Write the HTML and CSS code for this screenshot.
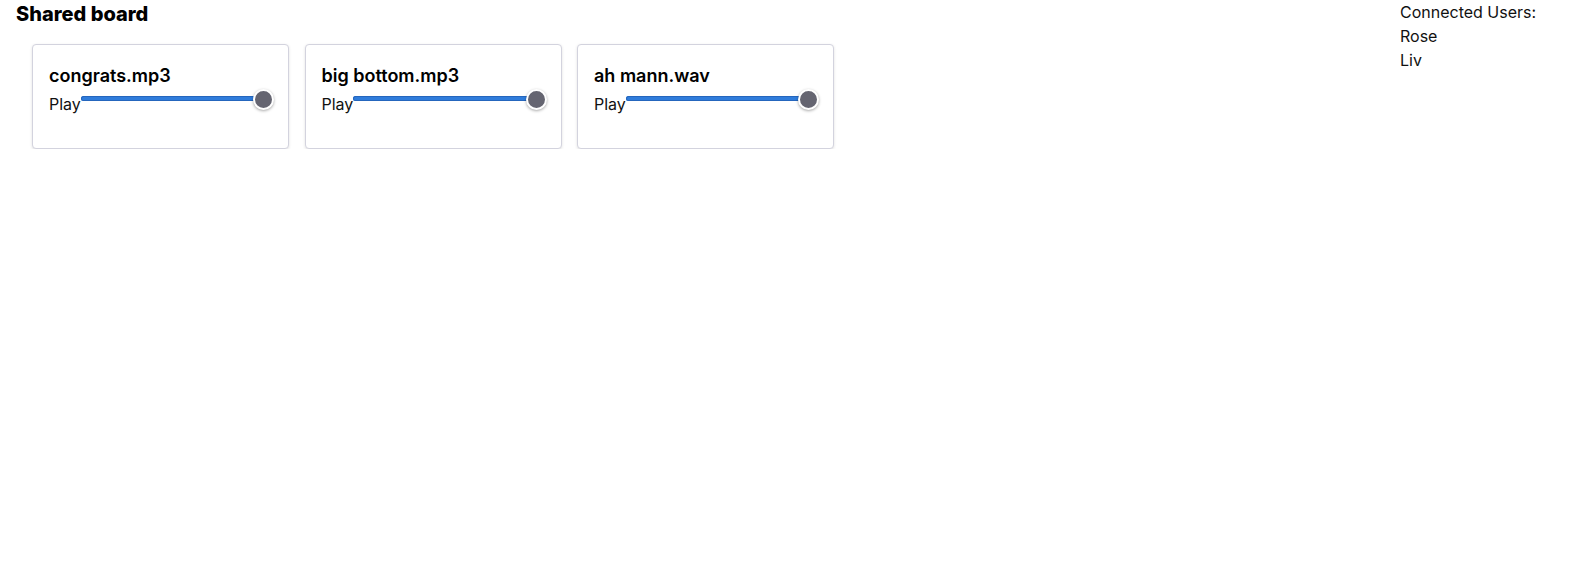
FILE: index.html
```html
<!DOCTYPE html>
<html>
<head>
<meta charset="utf-8">
<link rel="stylesheet" href="styles.css">
</head>
<body>
<div class="page">
  <main class="main">
    <h1 class="title">Shared board</h1>
    <div class="cards">
      <div class="card">
        <div class="card-title">congrats.mp3</div>
        <div class="row">
          <span class="play">Play</span>
          <div class="slider"><div class="track"></div><div class="thumb"></div></div>
        </div>
      </div>
      <div class="card">
        <div class="card-title">big bottom.mp3</div>
        <div class="row">
          <span class="play">Play</span>
          <div class="slider"><div class="track"></div><div class="thumb"></div></div>
        </div>
      </div>
      <div class="card">
        <div class="card-title">ah mann.wav</div>
        <div class="row">
          <span class="play">Play</span>
          <div class="slider"><div class="track"></div><div class="thumb"></div></div>
        </div>
      </div>
    </div>
  </main>
  <aside class="users">
    <div>Connected Users:</div>
    <div>Rose</div>
    <div>Liv</div>
  </aside>
</div>
</body>
</html>
```
FILE: styles.css
```css
html, body { margin: 0; padding: 0; background: #fff; }
body { font-family: Inter, "Noto Sans", sans-serif; color: #111; font-size: 16px; }
.page { display: flex; justify-content: space-between; }
.main { flex: 1; }
.title { margin: 0; padding: 0 16px; font-size: 20px; font-weight: 800; line-height: 28px; color: #000; }
.cards { display: flex; gap: 15.5px; padding-left: 32px; margin-top: 16px; }
.card {
  width: 223px;
  flex: none;
  border: 1px solid #d3d3de;
  border-radius: 4px;
  box-shadow: 0 1px 3px rgba(0,0,0,0.12);
  padding: 19px 16px 32px 16px;
  background: #fff;
}
.card-title { font-size: 18px; font-weight: 600; line-height: 24px; color: #000; }
.row { display: flex; margin-top: 4px; height: 24px; }
.play { line-height: 24px; color: #111; }
.slider { flex: 1; position: relative; height: 24px; }
.track {
  position: absolute; left: 0; right: 2px; top: 4px; height: 5px;
  background: #2f7cdb; border-radius: 3px;
  box-shadow: inset 0 0 0 1px #2566bd;
}
.thumb {
  position: absolute; right: -2px; top: -3px; width: 17px; height: 17px;
  border-radius: 50%; background: #656571; border: 2px solid #fff;
  box-shadow: 0 1px 3px rgba(0,0,0,0.35);
}
.users { width: 174px; flex: none; line-height: 24px; font-size: 16px; color: #111; }
```
